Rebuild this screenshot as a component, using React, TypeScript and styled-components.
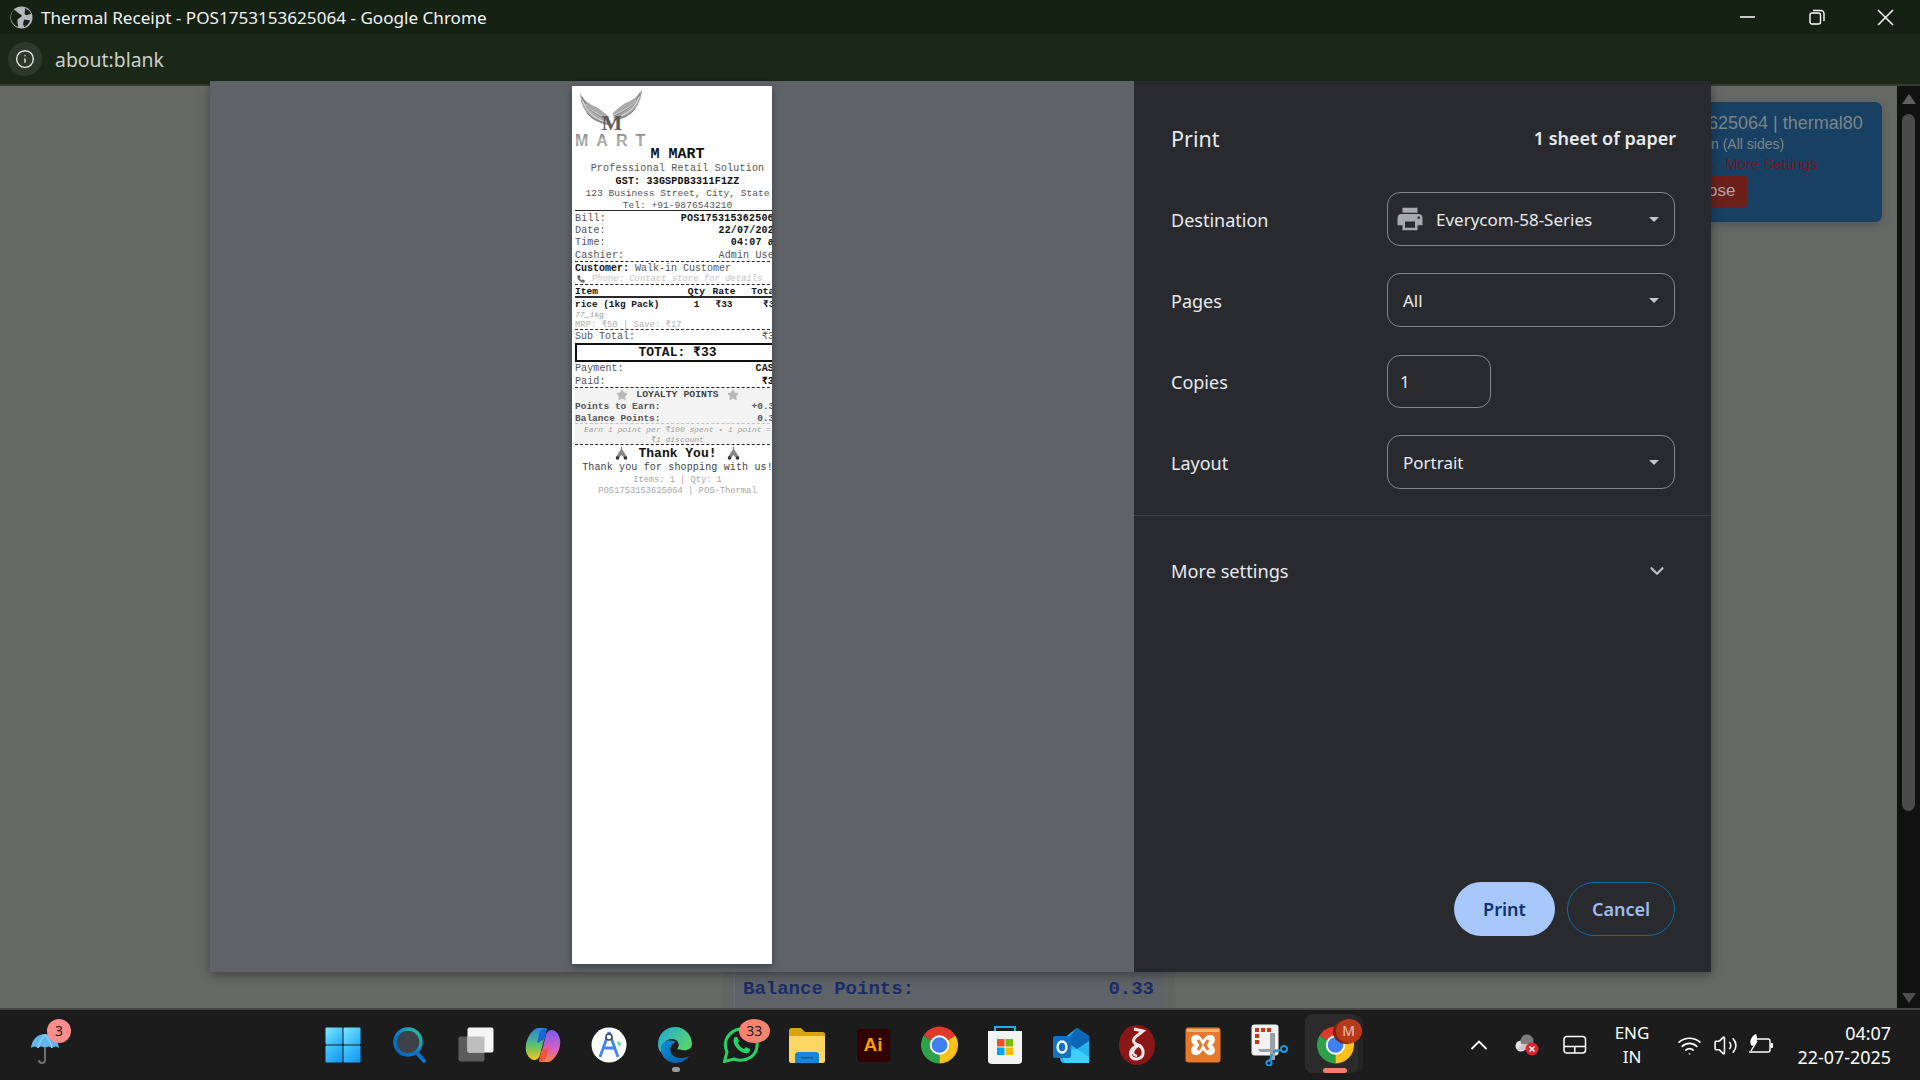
import React from "react";
import styled, { createGlobalStyle } from "styled-components";
import { ChevronDown, Info, Phone, Star, Volume2, Wifi } from "lucide-react";
import { MdPrint } from "react-icons/md";

const GlobalStyle = createGlobalStyle`
  html, body {
    margin: 0;
    padding: 0;
    width: 1920px;
    height: 1080px;
    overflow: hidden;
    background: #1c1c1c;
  }
  * { box-sizing: border-box; }
`;

const uiFont = `"Noto Sans", "Open Sans", Arial, sans-serif`;
const monoFont = `"Liberation Mono", "Courier New", monospace`;

const Screen = styled.div`
  position: relative;
  width: 1920px;
  height: 1080px;
  display: flex;
  flex-direction: column;
  font-family: ${uiFont};
  overflow: hidden;
`;

const TitleBar = styled.div`
  height: 34px;
  background: #152113;
  display: flex;
  align-items: center;
  padding-left: 10px;
  color: #f2f2f2;
  font-size: 17.1px;
`;

const TitleText = styled.span`
  margin-left: 8px;
  flex: 1;
`;

const WindowButton = styled.div`
  width: 69px;
  height: 34px;
  display: flex;
  align-items: center;
  justify-content: center;
`;

const AddressBar = styled.div`
  height: 52px;
  background: #1b2818;
  border-bottom: 2px solid #323f30;
  display: flex;
  align-items: center;
  padding-left: 8px;
  color: #c9cfc7;
  font-size: 19.4px;
  line-height: 36px;
`;

const InfoChip = styled.div`
  width: 34px;
  height: 34px;
  border-radius: 50%;
  background: #2c392a;
  display: flex;
  align-items: center;
  justify-content: center;
  margin-right: 13px;
  color: #e6e8e4;
`;

const AddressText = styled.span`
  padding-top: 2px;
`;

const PageArea = styled.div`
  flex: 1;
  display: flex;
  min-height: 0;
`;

const PageMain = styled.div`
  flex: 1;
  position: relative;
  background: #666866;
  display: flex;
  flex-direction: column;
  justify-content: flex-end;
`;

const NoticeCard = styled.div`
  position: absolute;
  top: 16px;
  right: 15px;
  width: 190px;
  height: 120px;
  padding: 10px 0 0 19px;
  border-radius: 7px;
  background: #174063;
  box-shadow: 0 3px 10px rgba(0, 0, 0, 0.18);
  font-family: "Liberation Sans", Arial, sans-serif;
  white-space: nowrap;
`;

const NoticeTitle = styled.div`
  margin-left: -3px;
  font-size: 18px;
  line-height: 22px;
  color: #7d8589;
`;

const NoticeLine = styled.div`
  font-size: 14px;
  line-height: 20px;
  color: #7d8589;
`;

const NoticeWarn = styled(NoticeLine)`
  margin-left: -5px;
  font-size: 15px;
  color: #6a1c24;
`;

const NoticeClose = styled.div`
  width: 46px;
  height: 31px;
  margin: 2px 0 0 -10px;
  padding-left: 7px;
  border-radius: 3px;
  background: #6e1f1c;
  color: #a8a8a8;
  font-size: 17px;
  line-height: 30px;
`;

const BackdropStrip = styled.div`
  margin-left: 723px;
  width: 452px;
  height: 36px;
  padding: 0 11px;
  background: #626563;
  display: flex;
`;

const BackdropInner = styled.div`
  flex: 1;
  display: flex;
  justify-content: space-between;
  align-items: center;
  padding: 0 10px 3px 8px;
  background: #5e6367;
  border-left: 1px solid #686c72;
  color: #1c2c68;
  font: bold 19px ${monoFont};
`;

const Scrollbar = styled.div`
  width: 23px;
  background: #111111;
  display: flex;
  flex-direction: column;
  align-items: center;
  padding: 8px 0 5px;
`;

const ScrollThumb = styled.div`
  width: 13px;
  flex: 1;
  margin: 10px 0 182px;
  border-radius: 7px;
  background: #4b4b4b;
`;

const ScrollArrow = styled.div<{ $down?: boolean }>`
  width: 0;
  height: 0;
  border-left: 7px solid transparent;
  border-right: 7px solid transparent;
  ${(p) => (p.$down ? "border-top: 10px solid #4e4e4e;" : "border-bottom: 10px solid #606060;")}
`;

const Dialog = styled.div`
  position: absolute;
  left: 210px;
  top: 81px;
  width: 1501px;
  height: 891px;
  display: flex;
  box-shadow: 0 3px 10px rgba(0, 0, 0, 0.35);
`;

const Preview = styled.div`
  width: 924px;
  background: #5f6368;
  display: flex;
  justify-content: center;
  padding-top: 5px;
`;

const Paper = styled.div`
  width: 200px;
  height: 878px;
  background: #ffffff;
  box-shadow: 0 3px 8px rgba(0, 0, 0, 0.35);
  padding-left: 3px;
  overflow: hidden;
  font-family: ${monoFont};
  color: #111111;
`;

const Receipt = styled.div`
  width: 205px;
`;

const LogoWrap = styled.div`
  height: 61px;
`;

const Line = styled.div<{ $h: number; $size: number; $bold?: boolean; $color?: string; $italic?: boolean; $track?: number }>`
  height: ${(p) => p.$h}px;
  padding-top: 1px;
  line-height: ${(p) => p.$h}px;
  font-size: ${(p) => p.$size}px;
  font-weight: ${(p) => (p.$bold ? 700 : 400)};
  font-style: ${(p) => (p.$italic ? "italic" : "normal")};
  color: ${(p) => p.$color || "#111111"};
  letter-spacing: ${(p) => p.$track || 0}px;
  white-space: nowrap;
`;

const Center = styled(Line)<{ $gap?: number }>`
  text-align: center;
  display: flex;
  justify-content: center;
  align-items: flex-start;
  gap: ${(p) => p.$gap || 0}px;
  svg {
    align-self: center;
  }
`;

const Split = styled(Line)`
  display: flex;
  justify-content: space-between;
`;

const Label = styled.span<{ $color?: string }>`
  color: ${(p) => p.$color || "#555555"};
`;

const Strong = styled.span`
  font-weight: 700;
  color: #111111;
`;

const Rule = styled.div<{ $dashed?: boolean; $w?: number; $color?: string }>`
  border-top: ${(p) => p.$w || 1}px ${(p) => (p.$dashed ? "dashed" : "solid")} ${(p) => p.$color || "#2a2a2a"};
`;

const TableRow = styled(Line)`
  display: grid;
  grid-template-columns: 108px 27px 28px 42px;
`;

const Cell = styled.span<{ $align?: string }>`
  text-align: ${(p) => p.$align || "left"};
`;

const TotalBox = styled.div`
  height: 19px;
  margin-top: 1px;
  border: 2px solid #111111;
  font-size: 13px;
  font-weight: 700;
  line-height: 15px;
  text-align: center;
`;

const LoyaltyBox = styled.div`
  background: #f3f3f3;
`;

const PhoneLine = styled(Line)`
  display: flex;
  align-items: center;
  gap: 7px;
  padding-left: 2px;
`;

const Panel = styled.div`
  width: 577px;
  background: #292a2d;
  color: #e8eaed;
  display: flex;
  flex-direction: column;
  padding-bottom: 36px;
`;

const PanelHeader = styled.div`
  display: flex;
  justify-content: space-between;
  align-items: center;
  height: 28px;
  margin: 43px 35px 40px 37px;
`;

const PanelTitle = styled.div`
  font-size: 21.5px;
`;

const SheetCount = styled.div`
  font-size: 18px;
  font-weight: 600;
`;

const Form = styled.div`
  display: flex;
  flex-direction: column;
  gap: 27px;
  padding: 0 36px 0 37px;
`;

const FormRow = styled.div<{ $shift?: number }>`
  display: grid;
  grid-template-columns: 216px 1fr;
  align-items: center;
  margin-top: ${(p) => p.$shift || 0}px;
`;

const FieldLabel = styled.div`
  font-size: 18px;
  padding-top: 1px;
`;

const Select = styled.div<{ $narrow?: boolean }>`
  width: ${(p) => (p.$narrow ? "104px" : "100%")};
  height: ${(p) => (p.$narrow ? "53px" : "54px")};
  border: 1px solid #85878b;
  border-radius: 13px;
  display: flex;
  align-items: center;
  padding: 0 15px 0 ${(p) => (p.$narrow ? "12px" : "15px")};
  font-size: 17px;
`;

const SelectText = styled.span`
  flex: 1;
`;

const Caret = styled.span`
  width: 0;
  height: 0;
  border-left: 5.5px solid transparent;
  border-right: 5.5px solid transparent;
  border-top: 5.5px solid #c4c7c5;
  margin-right: 0;
`;

const PrinterIcon = styled(MdPrint)`
  margin: 0 11px 0 -8px;
  color: #a6a9ad;
`;

const Divider = styled.div`
  height: 1px;
  margin-top: 26px;
  background: #3f4043;
`;

const MoreSettings = styled.div`
  display: flex;
  justify-content: space-between;
  align-items: center;
  height: 28px;
  margin: 41px 43px 0 37px;
  font-size: 18.2px;
  color: #e8eaed;
`;

const Actions = styled.div`
  margin-top: auto;
  padding-right: 36px;
  display: flex;
  justify-content: flex-end;
  gap: 12px;
`;

const ActionButton = styled.div<{ $primary?: boolean }>`
  height: 54px;
  width: ${(p) => (p.$primary ? "101px" : "108px")};
  border-radius: 27px;
  display: flex;
  align-items: center;
  justify-content: center;
  font-size: 18px;
  font-weight: 600;
  background: ${(p) => (p.$primary ? "#a8c7fa" : "transparent")};
  color: ${(p) => (p.$primary ? "#0c3276" : "#9dbdf2")};
  border: ${(p) => (p.$primary ? "none" : "1px solid #0a6fa6")};
`;

const Taskbar = styled.div`
  height: 72px;
  background: #1c1c1c;
  border-top: 2px solid #474747;
  display: flex;
  align-items: stretch;
`;

const WeatherSlot = styled.div`
  width: 310px;
  padding: 8px 0 0 28px;
`;

const WeatherIcon = styled.div`
  position: relative;
  width: 36px;
  height: 52px;
  padding: 13px 0 0 2px;
`;

const TaskIcons = styled.div`
  display: flex;
`;

const Tile = styled.div<{ $first?: boolean }>`
  position: relative;
  width: ${(p) => (p.$first ? "67.3px" : "66.1px")};
  padding-right: ${(p) => (p.$first ? "1.2px" : "0")};
  display: flex;
  align-items: center;
  justify-content: center;
  > svg {
    position: relative;
  }
`;

const ActiveBack = styled.div`
  position: absolute;
  left: 2px;
  top: 4px;
  width: 53px;
  height: 59px;
  border-radius: 7px;
  background: #2b2b2b;
  box-shadow: 6px 0 0 -1px #242424;
`;

const Badge = styled.div<{ $bg: string; $w: number; $h: number; $x: number; $y: number; $color?: string; $echo?: string }>`
  position: absolute;
  left: ${(p) => p.$x}px;
  top: ${(p) => p.$y}px;
  width: ${(p) => p.$w}px;
  height: ${(p) => p.$h}px;
  border-radius: 50%;
  background: ${(p) => p.$bg};
  box-shadow: ${(p) => (p.$echo ? `-3px 1px 0 ${p.$echo}` : "none")};
  color: ${(p) => p.$color || "#1b1b1b"};
  display: flex;
  align-items: center;
  justify-content: center;
  font-size: 14px;
  line-height: 1;
`;

const RunDot = styled.div`
  position: absolute;
  left: 30px;
  bottom: 8px;
  width: 8px;
  height: 5px;
  border-radius: 3px;
  background: #9a9a9a;
`;

const ActiveBar = styled.div`
  position: absolute;
  left: 20px;
  bottom: 7px;
  width: 24px;
  height: 5px;
  border-radius: 3px;
  background: #f0806c;
`;

const Tray = styled.div`
  margin-left: auto;
  padding-right: 29px;
  display: flex;
  align-items: center;
  color: #ffffff;
`;

const TraySlot = styled.div<{ $w: number }>`
  width: ${(p) => p.$w}px;
  display: flex;
  justify-content: center;
  align-items: center;
`;

const LangBlock = styled.div`
  width: 66px;
  margin-right: 6px;
  text-align: center;
  font-size: 17px;
  line-height: 24px;
`;

const Clock = styled.div`
  width: 112px;
  text-align: right;
  font-size: 17.9px;
  line-height: 24px;
  white-space: nowrap;
`;

const Wings = () => {
  const wing = (
    <>
      <path d="M33 39 C20 37 6 28 5 7 C9 14 14 18 19 20 C24 22 29 26 34 31 Z" fill="#a9a9a9" />
      <path d="M8 15 C11 26 21 33 33 37" fill="none" stroke="#e4e4e4" strokeWidth="0.9" />
      <path d="M7 11 C11 21 21 29 33 34" fill="none" stroke="#7c7c7c" strokeWidth="1" />
      <path d="M12 27 C17 33 25 36 33 38" fill="none" stroke="#7c7c7c" strokeWidth="1" />
      <path d="M11 18 C15 24 24 29 33 33" fill="none" stroke="#dddddd" strokeWidth="0.8" />
    </>
  );
  return (
    <svg width="75" height="61" viewBox="0 0 75 61">
      <defs>
        <linearGradient id="logoMetal" x1="0" y1="0" x2="0" y2="1">
          <stop offset="0" stopColor="#7a7a7a" />
          <stop offset="0.55" stopColor="#b4b4b4" />
          <stop offset="1" stopColor="#8c8c8c" />
        </linearGradient>
      </defs>
      <g>{wing}</g>
      <g transform="translate(72 -4) scale(-1 1)">{wing}</g>
      <text x="37" y="44" textAnchor="middle" fontFamily="Liberation Serif, serif" fontWeight="700" fontSize="22" fill="#5c5c5c">
        M
      </text>
      <text x="0" y="59.5" fontFamily="Liberation Sans, sans-serif" fontWeight="700" fontSize="16" letterSpacing="8" fill="url(#logoMetal)">
        MART
      </text>
    </svg>
  );
};

const PrayIcon = () => (
  <svg width="13" height="13" viewBox="0 0 13 13">
    <path d="M6 0 L7 0 L7 8 L6 8 Z" fill="#777" />
    <path d="M6 2 L1 10 L4 11 L6.5 8 L9 11 L12 10 L7 2 Z" fill="#888" />
    <circle cx="2.5" cy="11" r="1.8" fill="#333" />
    <circle cx="10.5" cy="11" r="1.8" fill="#333" />
  </svg>
);

const GlobeIcon = () => (
  <svg width="23" height="23" viewBox="0 0 24 24">
    <circle cx="12" cy="12" r="11.5" fill="#b3b8bd" />
    <path d="M4 4 C8 6 9 9 12 9 C13 12 9 12 8 14 C7 16 9 19 8 22 C4 20 1 16 1 12 C1 9 2 6 4 4 Z" fill="#152113" />
    <path d="M15 2 C17 5 14 7 16 9 C19 10 21 8 22 8 C21 5 18 3 15 2 Z M15 14 L21 15 C20 18 18 20 15 22 C13 19 14 16 15 14 Z" fill="#152113" />
  </svg>
);

const ChromeIcon = () => (
  <svg width="37" height="38" viewBox="4 4 40 40">
    <path d="M24 24 L6.68 14 A20 20 0 0 1 41.32 14 Z" fill="#e0392b" />
    <path d="M24 24 L6.68 14 A20 20 0 0 0 24 44 Z" fill="#2ea24a" />
    <path d="M24 24 L24 44 A20 20 0 0 0 41.32 14 Z" fill="#fbc116" />
    <circle cx="24" cy="24" r="10.5" fill="#ffffff" />
    <circle cx="24" cy="24" r="8.5" fill="#3f7ff0" />
  </svg>
);

const StartIcon = () => (
  <svg width="36" height="36" viewBox="0 0 36 36">
    <defs>
      <linearGradient id="winTop" x1="0" y1="0" x2="1" y2="1">
        <stop offset="0" stopColor="#7fe6ff" />
        <stop offset="1" stopColor="#22aef5" />
      </linearGradient>
      <linearGradient id="winBottom" x1="0" y1="0" x2="1" y2="1">
        <stop offset="0" stopColor="#4ccaff" />
        <stop offset="1" stopColor="#0f94f2" />
      </linearGradient>
    </defs>
    <rect x="0.5" y="0.5" width="17" height="17" rx="1" fill="url(#winTop)" />
    <rect x="18.5" y="0.5" width="17" height="17" rx="1" fill="url(#winTop)" />
    <rect x="0.5" y="18.5" width="17" height="17" rx="1" fill="url(#winBottom)" />
    <rect x="18.5" y="18.5" width="17" height="17" rx="1" fill="url(#winBottom)" />
  </svg>
);

const SearchIcon = () => (
  <svg width="36" height="36" viewBox="0 0 36 36">
    <defs>
      <linearGradient id="searchRing" x1="1" y1="0" x2="0" y2="1">
        <stop offset="0" stopColor="#35c78a" />
        <stop offset="0.5" stopColor="#0a7fd1" />
        <stop offset="1" stopColor="#0561b8" />
      </linearGradient>
    </defs>
    <circle cx="16" cy="15" r="13" fill="#3d4247" stroke="url(#searchRing)" strokeWidth="3.5" />
    <path d="M25 26 L32 34" stroke="#0a73c9" strokeWidth="4" strokeLinecap="round" />
  </svg>
);

const TaskViewIcon = () => (
  <svg width="36" height="36" viewBox="0 0 36 36">
    <rect x="0.5" y="9.5" width="26" height="25" rx="2" fill="#5c5c5c" />
    <rect x="9.5" y="0.5" width="26" height="25" rx="2" fill="#f5f5f5" />
    <rect x="9.5" y="9.5" width="17" height="16" rx="1" fill="#bdbdbd" />
  </svg>
);

const CopilotIcon = () => (
  <svg width="36" height="36" viewBox="0 0 36 36">
    <defs>
      <linearGradient id="copA" x1="0" y1="0" x2="0" y2="1">
        <stop offset="0" stopColor="#2a7fe8" />
        <stop offset="0.55" stopColor="#5ec26a" />
        <stop offset="1" stopColor="#f5c518" />
      </linearGradient>
      <linearGradient id="copB" x1="0" y1="0" x2="0" y2="1">
        <stop offset="0" stopColor="#7c5cf0" />
        <stop offset="0.6" stopColor="#d85fc0" />
        <stop offset="1" stopColor="#f58a3c" />
      </linearGradient>
    </defs>
    <path d="M12 1 H22 L15 28 C14 33 9 34 6 32 C2 29 0 24 1 18 C2 10 7 3 12 1 Z" fill="url(#copA)" />
    <path d="M24 35 H14 L21 8 C22 3 27 2 30 4 C34 7 36 12 35 18 C34 26 29 33 24 35 Z" fill="url(#copB)" />
    <path d="M22 1 C18 1 15 3 14 8 L12 16 L20 12 Z" fill="#1666d8" />
    <path d="M14 35 C18 35 21 33 22 28 L24 20 L16 24 Z" fill="#f0553f" />
  </svg>
);

const StudioIcon = () => (
  <svg width="36" height="36" viewBox="0 0 36 36">
    <circle cx="18" cy="18" r="17.5" fill="#ffffff" />
    <path d="M18 5 L9 30 M18 5 L27 30 M11 21 H25" stroke="#4285f4" strokeWidth="2.8" fill="none" />
    <circle cx="18" cy="10" r="3" fill="#fff" stroke="#3a4a5a" strokeWidth="1.5" />
    <path d="M26 14 L30 16 L28 20 Z" fill="#3ddc84" />
  </svg>
);

const EdgeIcon = () => (
  <svg width="36" height="36" viewBox="0 0 36 36">
    <defs>
      <linearGradient id="edgeA" x1="0" y1="0" x2="1" y2="1">
        <stop offset="0" stopColor="#0f8ed8" />
        <stop offset="1" stopColor="#0c59a4" />
      </linearGradient>
      <linearGradient id="edgeB" x1="0" y1="0" x2="1" y2="0.5">
        <stop offset="0" stopColor="#1ea7df" />
        <stop offset="1" stopColor="#57d36f" />
      </linearGradient>
    </defs>
    <path d="M1 17 C1 7 9 0 18 0 C28 0 35 8 35 17 C35 22 30 24 25 23 L20 22 C24 18 21 12 15 12 C8 12 3 19 5 26 C2 24 1 21 1 17 Z" fill="url(#edgeB)" />
    <path d="M4 20 C3 30 11 36 19 36 C25 36 29 33 32 29 C27 32 17 32 14 26 C12 21 15 16 19 15 C12 12 5 14 4 20 Z" fill="url(#edgeA)" />
  </svg>
);

const WhatsappIcon = () => (
  <svg width="36" height="36" viewBox="0 0 36 36">
    <path d="M1.5 34.5 L4 25 C1 19 2 11 8 6 C15 0 26 1 31 8 C36 15 35 25 28 30 C22 34 16 34 11 32 Z" fill="none" stroke="#25d366" strokeWidth="3" />
    <path d="M12 10 C10 12 10 16 13 20 C16 24 21 27 25 26 C27 25 27 23 27 22 L23 20 L21 22 C18 21 16 18 15 16 L16 14 L14 10 Z" fill="#25d366" />
  </svg>
);

const FolderIcon = () => (
  <svg width="36" height="36" viewBox="0 0 36 36">
    <path d="M0 4 C0 2 1 1 3 1 H12 L16 5 H34 C35 5 36 6 36 7 V12 H0 Z" fill="#dca411" />
    <path d="M0 9 H36 V34 C36 35 35 36 34 36 H2 C1 36 0 35 0 34 Z" fill="#fdd663" />
    <path d="M6 36 V28 C6 26 8 25 9 25 H27 C29 25 30 26 30 28 V36 Z" fill="#1486d8" />
    <rect x="12" y="30" width="12" height="1.5" fill="#0c5ea3" />
  </svg>
);

const IllustratorTile = styled.div`
  width: 33px;
  height: 33px;
  border-radius: 4px;
  background: #310000;
  color: #ff9a00;
  font: 700 19px "Liberation Sans", Arial, sans-serif;
  display: flex;
  align-items: center;
  justify-content: center;
`;

const StoreIcon = () => (
  <svg width="36" height="40" viewBox="0 0 36 40">
    <path d="M8 8 V2 H28 V8" fill="none" stroke="#29a8ea" strokeWidth="2" />
    <path d="M1 6 H35 V36 C35 38 33 39 31 39 H5 C3 39 1 38 1 36 Z" fill="#f4f4f4" />
    <rect x="10" y="14" width="7.5" height="7.5" fill="#f25022" />
    <rect x="18.5" y="14" width="7.5" height="7.5" fill="#7fba00" />
    <rect x="10" y="22.5" width="7.5" height="7.5" fill="#00a4ef" />
    <rect x="18.5" y="22.5" width="7.5" height="7.5" fill="#ffb900" />
  </svg>
);

const OutlookIcon = () => (
  <svg width="37" height="36" viewBox="0 0 37 36">
    <path d="M7 30 V14 L24 1 L36 9 V33 C36 35 35 36 33 36 H11 C9 36 7 34 7 30 Z" fill="#27b5ec" />
    <path d="M12 14 L24 1 L36 9 V14 L24 22 Z" fill="#0b66b8" />
    <path d="M7 26 L24 22 L36 30 V36 H12 Z" fill="#3ed0fb" />
    <rect x="0" y="9" width="18" height="22" rx="2" fill="#1272c8" />
    <ellipse cx="9" cy="20" rx="4.4" ry="5.5" fill="none" stroke="#fff" strokeWidth="2.4" />
  </svg>
);

const WslIcon = () => (
  <svg width="36" height="40" viewBox="0 0 36 40">
    <ellipse cx="18" cy="20" rx="18" ry="20" fill="#8a1618" />
    <path d="M15 4 L24 6 L19 10 C13 14 13 18 19 20 C26 23 26 33 18 34 C10 35 9 25 17 21" fill="none" stroke="#f0e6e6" strokeWidth="3" />
    <path d="M22 20 C14 22 11 30 18 31" fill="none" stroke="#f0e6e6" strokeWidth="2.4" />
  </svg>
);

const XamppIcon = () => (
  <svg width="36" height="36" viewBox="0 0 36 36">
    <rect x="0.5" y="0.5" width="35" height="35" rx="3" fill="#e8782a" />
    <rect x="2" y="2" width="32" height="3" fill="#f2b27a" />
    <path d="M10 8 C14 7 16 11 18 13 C20 11 22 7 26 8 C31 9 31 15 27 18 C31 21 31 27 26 28 C22 29 20 25 18 23 C16 25 14 29 10 28 C5 27 5 21 9 18 C5 15 5 9 10 8 Z" fill="#ffffff" />
    <path d="M13 13 L16 18 L13 23 M23 13 L20 18 L23 23" fill="none" stroke="#e8782a" strokeWidth="3" />
  </svg>
);

const SnipIcon = () => (
  <svg width="38" height="42" viewBox="0 0 38 42">
    <rect x="0.5" y="0.5" width="27" height="31" rx="3" fill="#f2f2f2" />
    <path d="M4 4 h4 v4 h-4z M10 4 h4 v4 h-4z M16 4 h4 v4 h-4z M4 10 h4 v4 h-4z M4 16 h4 v4 h-4z" fill="#c8361a" />
    <path d="M7 25 H28 L24 28 H9 Z M19 9 H24 V36 H19 Z" fill="#9aa0a6" />
    <circle cx="33" cy="25" r="3" fill="none" stroke="#1f95de" strokeWidth="2" />
    <circle cx="18" cy="39" r="2.6" fill="none" stroke="#1f95de" strokeWidth="2" />
    <path d="M30 26 L22 28 M19 36 L21 30" stroke="#1f95de" strokeWidth="2" />
  </svg>
);

const UmbrellaIcon = () => (
  <svg width="30" height="34" viewBox="0 0 30 34">
    <path d="M1 17 C2 8 8 3 15 3 C22 3 28 8 29 17 C26 15 24 15 22 17 C20 15 18 15 15 17 C12 15 10 15 8 17 C6 15 4 15 1 17 Z" fill="#62b7f0" />
    <path d="M15 4 C11 8 9 12 8 17 M15 4 C19 8 21 12 22 17" stroke="#a7dcfb" strokeWidth="1" fill="none" />
    <path d="M15 16 V29 C15 33 9 33 9 29" stroke="#6f6f6f" strokeWidth="2" fill="none" />
  </svg>
);

const CloudErrorIcon = () => (
  <svg width="26" height="24" viewBox="0 0 26 24">
    <circle cx="7" cy="13" r="5.5" fill="#e4e4e4" />
    <circle cx="13" cy="8" r="6.5" fill="#7d7d7d" />
    <path d="M3 17 H15 V11 H8 Z" fill="#c9c9c9" />
    <circle cx="18" cy="16" r="6.5" fill="#d92532" />
    <path d="M15.5 13.5 L20.5 18.5 M20.5 13.5 L15.5 18.5" stroke="#fff" strokeWidth="1.6" />
  </svg>
);

const TouchpadIcon = () => (
  <svg width="24" height="20" viewBox="0 0 24 20" fill="none" stroke="#fff" strokeWidth="1.5">
    <rect x="1" y="1.5" width="21.5" height="16.5" rx="3" />
    <path d="M1 11.5 H22.5 M11.75 11.5 V18" />
  </svg>
);

const BatteryLeafIcon = () => (
  <svg width="26" height="24" viewBox="0 0 26 24" fill="none" stroke="#fff" strokeWidth="1.4">
    <path d="M9 6 H20 C21 6 22 7 22 8 V17 C22 18 21 19 20 19 H1" />
    <rect x="22.5" y="10" width="2.5" height="5" rx="1" fill="#fff" stroke="none" />
    <path d="M3 12 C1 7 4 3 8 1 C10 5 9 10 5 13 Z" fill="#fff" stroke="none" />
    <path d="M3 18 L9 8" />
  </svg>
);

const taskIcons = [
  <SearchIcon key="search" />,
  <TaskViewIcon key="tasks" />,
  <CopilotIcon key="copilot" />,
  <StudioIcon key="studio" />,
];

export default function App() {
  return (
    <>
      <GlobalStyle />
      <Screen>
        <TitleBar>
          <GlobeIcon />
          <TitleText>Thermal Receipt - POS1753153625064 - Google Chrome</TitleText>
          <WindowButton>
            <svg width="16" height="16" viewBox="0 0 16 16">
              <path d="M0 8 H15" stroke="#fff" strokeWidth="1.5" />
            </svg>
          </WindowButton>
          <WindowButton>
            <svg width="16" height="16" viewBox="0 0 16 16" fill="none" stroke="#fff" strokeWidth="1.4">
              <rect x="1" y="4" width="10.5" height="11" rx="2" />
              <path d="M4 1.5 H12 C13.5 1.5 15 3 15 4.5 V12" />
            </svg>
          </WindowButton>
          <WindowButton>
            <svg width="17" height="17" viewBox="0 0 17 17">
              <path d="M1 1 L16 16 M16 1 L1 16" stroke="#fff" strokeWidth="1.5" />
            </svg>
          </WindowButton>
        </TitleBar>

        <AddressBar>
          <InfoChip>
            <Info size={20} strokeWidth={1.7} />
          </InfoChip>
          <AddressText>about:blank</AddressText>
        </AddressBar>

        <PageArea>
          <PageMain>
            <NoticeCard>
              <NoticeTitle>625064 | thermal80</NoticeTitle>
              <NoticeLine>n (All sides)</NoticeLine>
              <NoticeWarn>→ More Settings</NoticeWarn>
              <NoticeClose>ose</NoticeClose>
            </NoticeCard>
            <BackdropStrip>
              <BackdropInner>
                <span>Balance Points:</span>
                <span>0.33</span>
              </BackdropInner>
            </BackdropStrip>
          </PageMain>
          <Scrollbar>
            <ScrollArrow />
            <ScrollThumb />
            <ScrollArrow $down />
          </Scrollbar>
        </PageArea>

        <Taskbar>
          <WeatherSlot>
            <WeatherIcon>
              <UmbrellaIcon />
              <Badge $bg="#ff8d8d" $w={24} $h={24} $x={19} $y={1}>3</Badge>
            </WeatherIcon>
          </WeatherSlot>
          <TaskIcons>
            <Tile $first>
              <StartIcon />
            </Tile>
            {taskIcons.map((icon, i) => (
              <Tile key={i}>{icon}</Tile>
            ))}
            <Tile>
              <EdgeIcon />
              <RunDot />
            </Tile>
            <Tile>
              <WhatsappIcon />
              <Badge $bg="#f58471" $w={31} $h={24} $x={31} $y={9}>33</Badge>
            </Tile>
            <Tile>
              <FolderIcon />
            </Tile>
            <Tile>
              <IllustratorTile>Ai</IllustratorTile>
            </Tile>
            <Tile>
              <ChromeIcon />
            </Tile>
            <Tile>
              <StoreIcon />
            </Tile>
            <Tile>
              <OutlookIcon />
            </Tile>
            <Tile>
              <WslIcon />
            </Tile>
            <Tile>
              <XamppIcon />
            </Tile>
            <Tile>
              <SnipIcon />
            </Tile>
            <Tile>
              <ActiveBack />
              <ChromeIcon />
              <Badge $bg="#b93a1a" $echo="#7d2412" $w={26} $h={24} $x={33} $y={9} $color="#eec4b8">M</Badge>
              <ActiveBar />
            </Tile>
          </TaskIcons>
          <Tray>
            <TraySlot $w={48}>
              <svg width="18" height="12" viewBox="0 0 18 12">
                <path d="M1.5 10 L9 2.5 L16.5 10" fill="none" stroke="#fff" strokeWidth="1.8" />
              </svg>
            </TraySlot>
            <TraySlot $w={48}>
              <CloudErrorIcon />
            </TraySlot>
            <TraySlot $w={48}>
              <TouchpadIcon />
            </TraySlot>
            <LangBlock>
              ENG
              <br />
              IN
            </LangBlock>
            <TraySlot $w={36}>
              <Wifi size={25} strokeWidth={1.6} />
            </TraySlot>
            <TraySlot $w={36}>
              <Volume2 size={25} strokeWidth={1.5} />
            </TraySlot>
            <TraySlot $w={36}>
              <BatteryLeafIcon />
            </TraySlot>
            <Clock>
              04:07
              <br />
              22-07-2025
            </Clock>
          </Tray>
        </Taskbar>

        <Dialog>
          <Preview>
            <Paper>
              <Receipt>
                <LogoWrap>
                  <Wings />
                </LogoWrap>
                <Center $h={13} $size={15} $bold>M MART</Center>
                <Center $h={15} $size={10} $track={0.2} $color="#555555">Professional Retail Solution</Center>
                <Center $h={12} $size={10} $track={0.2} $bold>GST: 33GSPDB3311F1ZZ</Center>
                <Center $h={12} $size={9.6} $color="#555555">123 Business Street, City, State</Center>
                <Center $h={11} $size={9.6} $color="#555555">Tel: +91-9876543210</Center>
                <Rule />
                <Split $h={13} $size={10} $track={0.2}>
                  <Label>Bill:</Label>
                  <Strong>POS1753153625064</Strong>
                </Split>
                <Split $h={12} $size={10} $track={0.15}>
                  <Label>Date:</Label>
                  <Strong>22/07/2025</Strong>
                </Split>
                <Split $h={12} $size={10} $track={0.15}>
                  <Label>Time:</Label>
                  <Strong>04:07 am</Strong>
                </Split>
                <Split $h={13} $size={10} $track={0.15}>
                  <Label>Cashier:</Label>
                  <Label>Admin User</Label>
                </Split>
                <Rule $dashed />
                <Line $h={11} $size={10} $color="#555555">
                  <Strong>Customer:</Strong> Walk-in Customer
                </Line>
                <PhoneLine $h={11} $size={8.9} $italic $color="#c4c4c4">
                  <Phone size={8} fill="#666666" color="#666666" />
                  Phone: Contact store for details
                </PhoneLine>
                <Rule $dashed />
                <TableRow $h={11} $size={9.6} $bold>
                  <Cell>Item</Cell>
                  <Cell $align="center">Qty</Cell>
                  <Cell $align="center">Rate</Cell>
                  <Cell $align="right">Total</Cell>
                </TableRow>
                <Rule $w={2} />
                <TableRow $h={11} $size={9.4} $bold>
                  <Cell>rice (1kg Pack)</Cell>
                  <Cell $align="center">1</Cell>
                  <Cell $align="center">₹33</Cell>
                  <Cell $align="right">₹33</Cell>
                </TableRow>
                <Line $h={10} $size={8} $italic $color="#999999">77_1kg</Line>
                <Line $h={10} $size={8.9} $color="#b0b0b0">MRP: ₹50 | Save: ₹17</Line>
                <Rule $dashed />
                <Split $h={12} $size={10} $color="#555555">
                  <span>Sub Total:</span>
                  <span>₹33</span>
                </Split>
                <TotalBox>TOTAL: ₹33</TotalBox>
                <Split $h={12} $size={10} $track={0.1}>
                  <Label>Payment:</Label>
                  <Strong>CASH</Strong>
                </Split>
                <Split $h={13} $size={10} $track={0.1}>
                  <Label>Paid:</Label>
                  <Strong>₹33</Strong>
                </Split>
                <Rule $dashed />
                <LoyaltyBox>
                  <Center $h={12} $size={9.8} $gap={8} $bold $color="#444444">
                    <Star size={12} fill="#b8b8b8" color="#b8b8b8" />
                    LOYALTY POINTS
                    <Star size={12} fill="#b8b8b8" color="#b8b8b8" />
                  </Center>
                  <Split $h={12} $size={9.5} $bold $color="#555555">
                    <span>Points to Earn:</span>
                    <span>+0.33</span>
                  </Split>
                  <Split $h={11} $size={9.5} $bold $color="#555555">
                    <span>Balance Points:</span>
                    <span>0.33</span>
                  </Split>
                  <Rule $dashed $color="#c4c4c4" />
                  <Center $h={10} $size={8} $italic $color="#a0a0a0">Earn 1 point per ₹100 spent • 1 point =</Center>
                  <Center $h={10} $size={8} $italic $color="#a0a0a0">₹1 discount</Center>
                </LoyaltyBox>
                <Rule $dashed />
                <Center $h={15} $size={13} $gap={10} $bold>
                  <PrayIcon />
                  Thank You!
                  <PrayIcon />
                </Center>
                <Center $h={14} $size={10} $track={0.15} $color="#444444">Thank you for shopping with us!</Center>
                <Center $h={11} $size={8.7} $color="#a8a8a8">Items: 1 | Qty: 1</Center>
                <Center $h={10} $size={8.8} $color="#a8a8a8">POS1753153625064 | POS-Thermal</Center>
              </Receipt>
            </Paper>
          </Preview>

          <Panel>
            <PanelHeader>
              <PanelTitle>Print</PanelTitle>
              <SheetCount>1 sheet of paper</SheetCount>
            </PanelHeader>
            <Form>
              <FormRow>
                <FieldLabel>Destination</FieldLabel>
                <Select>
                  <PrinterIcon size={30} />
                  <SelectText>Everycom-58-Series</SelectText>
                  <Caret />
                </Select>
              </FormRow>
              <FormRow>
                <FieldLabel>Pages</FieldLabel>
                <Select>
                  <SelectText>All</SelectText>
                  <Caret />
                </Select>
              </FormRow>
              <FormRow $shift={1}>
                <FieldLabel>Copies</FieldLabel>
                <Select $narrow>
                  <SelectText>1</SelectText>
                </Select>
              </FormRow>
              <FormRow>
                <FieldLabel>Layout</FieldLabel>
                <Select>
                  <SelectText>Portrait</SelectText>
                  <Caret />
                </Select>
              </FormRow>
            </Form>
            <Divider />
            <MoreSettings>
              More settings
              <ChevronDown size={22} strokeWidth={2.4} color="#bdc1c6" />
            </MoreSettings>
            <Actions>
              <ActionButton $primary>Print</ActionButton>
              <ActionButton>Cancel</ActionButton>
            </Actions>
          </Panel>
        </Dialog>
      </Screen>
    </>
  );
}
